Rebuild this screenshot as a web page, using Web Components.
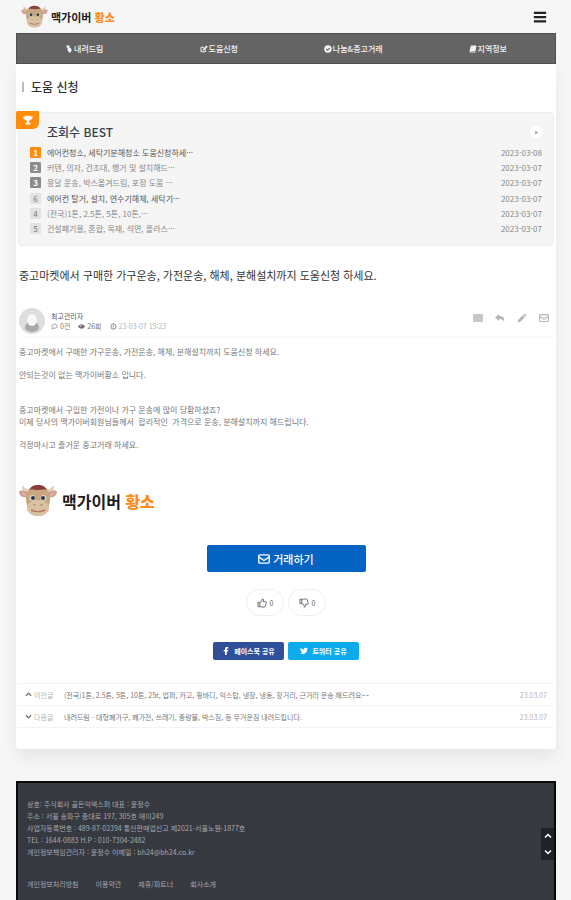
<!DOCTYPE html>
<html lang="ko">
<head>
<meta charset="utf-8">
<meta name="viewport" content="width=device-width, initial-scale=1">
<title>도움 신청 - 맥가이버 황소</title>
<style>
  html{
    height:100%;
  }
  body{
    margin:0;
    min-height:100%;
    box-sizing:border-box;
    padding:0 15px 0 16px;
    display:flex;
    flex-direction:column;
    background:#f6f6f6;
    color:#777;
    font-family:"Noto Sans CJK KR", "Noto Sans", sans-serif;
    font-size:8px;
    line-height:12px;
  }
  main{
    background:#fff;
    border-radius:0 0 4px 4px;
    padding:14px 2px 21px;
    margin-bottom:32px;
    box-shadow:0 8px 16px rgba(0,0,0,.07);
  }
</style>
</head>
<body>
  <site-header></site-header>
  <nav-bar>
    <nav-item icon="hand">내려드림</nav-item>
    <nav-item icon="edit">도움신청</nav-item>
    <nav-item icon="check">나눔&amp;중고거래</nav-item>
    <nav-item icon="book">지역정보</nav-item>
  </nav-bar>

  <main>
    <board-title>도움 신청</board-title>

    <best-list heading="조회수 BEST">
      <best-item rank="1" date="2023-03-08" level="top" strong>에어컨청소, 세탁기분해청소 도움신청하세···</best-item>
      <best-item rank="2" date="2023-03-07" level="mid">커텐, 의자, 건조대, 행거 및 설치해드···</best-item>
      <best-item rank="3" date="2023-03-07" level="mid">용달 운송, 박스옮겨드림, 포장 도움 ···</best-item>
      <best-item slot="more" rank="6" date="2023-03-07" strong>에어컨 탈거, 설치, 연수기해체, 세탁기···</best-item>
      <best-item slot="more" rank="4" date="2023-03-07">(전국)1톤, 2.5톤, 5톤, 10톤,···</best-item>
      <best-item slot="more" rank="5" date="2023-03-07">건설폐기물, 혼합, 목재, 석면, 플라스···</best-item>
    </best-list>

    <post-view>
      <span slot="title">중고마켓에서 구매한 가구운송, 가전운송, 해체, 분해설치까지 도움신청 하세요.</span>
      <span slot="author">최고관리자</span>
      <post-stat slot="meta" icon="comment">0건</post-stat>
      <post-stat slot="meta" icon="eye">26회</post-stat>
      <post-stat slot="meta" icon="clock" light>23-03-07 15:23</post-stat>
      <post-text>중고마켓에서 구매한 가구운송, 가전운송, 해체, 분해설치까지 도움신청 하세요.</post-text>
      <post-text>안되는것이 없는 맥가이버황소 입니다.</post-text>
      <post-text spaced>중고마켓에서 구입한 가전이나 가구 운송에 많이 당황하셨죠?<br>이제 당사의 맥가이버회원님들께서&nbsp; 합리적인&nbsp; 가격으로 운송, 분해설치까지 해드립니다.</post-text>
      <post-text>걱정마시고 즐거운 중고거래 하세요.</post-text>
    </post-view>

    <bull-logo large></bull-logo>

    <post-actions></post-actions>

    <sibling-post icon="up" label="이전글" date="23.03.07">(전국)1톤, 2.5톤, 5톤, 10톤, 25t, 업퍼, 카고, 윙바디, 익스탑, 냉장, 냉동, 장거리, 근거리 운송 해드려요~~</sibling-post>
    <sibling-post icon="down" label="다음글" date="23.03.07">내려드림 - 대형폐가구, 폐가전, 쓰레기, 중량물, 박스짐, 등 무거운짐 내려드립니다.</sibling-post>
  </main>

  <site-footer>
    <div>상호: 주식회사 골든익엑스퍼 대표 : 윤정수</div>
    <div>주소 : 서울 송파구 중대로 197, 305호 에이249</div>
    <div>사업자등록번호 : 489-87-02394 통신판매업신고 제2021-서울노원-1877호</div>
    <div>TEL : 1644-0883 H.P : 010-7304-2482</div>
    <div>개인정보책임관리자 : 윤정수 이메일 : bh24@bh24.co.kr</div>
    <a slot="links" href="#">개인정보처리방침</a>
    <a slot="links" href="#">이용약관</a>
    <a slot="links" href="#">제휴/파트너</a>
    <a slot="links" href="#">회사소개</a>
  </site-footer>
  <page-scroller></page-scroller>

<script>
// all icons share a 16x16 box
const icons = {
  menu: '<path d="M1 2h14v2.6H1zM1 6.8h14v2.6H1zM1 11.6h14v2.6H1z"/>',
  hand: '<path d="M3 1h6v4l4 3v3l-2 4H8L5 10V5H3z"/>',
  edit: '<path d="M11 9.500V13.500H2V4.500H8" fill="none" stroke="currentColor" stroke-width="2"/><path d="M6 8l7-7 2.500 2.500-7 7L5.500 11z"/>',
  check: '<path fill-rule="evenodd" d="M8 0.500a7.500 7.500 0 1 0 0 15 7.500 7.500 0 0 0 0-15zM7 12L3.500 8.500 5 7l2 2 4-4 1.500 1.500z"/>',
  book: '<path d="M4 1h11l-2 11H3.500v1H13v2H2.500L1 12z"/>',
  trophy: '<path d="M4 1h8v1.500h3.500c0 3.500-1.500 5-4 5.500L9.500 10v2.500H12V15H4v-2.500h2.500V10L4.500 8C2 7.500.5 6 .5 2.500H4z"/>',
  play: '<path d="M4 2l9 6-9 6z"/>',
  comment: '<path d="M8 2.500c3.500 0 6 2 6 4.700s-2.500 4.800-6 4.800c-.8 0-1.500 0-2.200-.3L2.500 14l1-3.300C2.500 9.800 2 8.500 2 7.200 2 4.500 4.500 2.500 8 2.500z" fill="none" stroke="currentColor" stroke-width="1.600"/>',
  eye: '<path d="M0 8c2-3.500 5-5 8-5s6 1.500 8 5c-2 3.500-5 5-8 5s-6-1.500-8-5z"/><circle cx="6.500" cy="6.500" r="1.500" fill="#fff"/>',
  clock: '<circle cx="8" cy="8" r="6" fill="none" stroke="currentColor" stroke-width="2"/><path d="M8 4.500V9H5.500" fill="none" stroke="currentColor" stroke-width="1.600"/>',
  list: '<path d="M0 2h16v2.400H0zM0 5.200h16v2.400H0zM0 8.400h16v2.400H0zM0 11.600h16V14H0z"/>',
  reply: '<path d="M6.500 1.500v3.200c6.500 0 9.500 3.300 8 9.800-.8-3.700-3-5-8-5v3.300L0 7z"/>',
  pencil: '<path d="M1 15l1-4.200L9.200 3.600l3.200 3.200L5.200 14zM10.200 2.600L12 .8l3.200 3.200-1.800 1.800z"/>',
  mail: '<rect x="1" y="2.500" width="14" height="11" rx="1.500" fill="none" stroke="currentColor" stroke-width="1.800"/><path d="M1.500 5.500L8 10l6.500-4.500" fill="none" stroke="currentColor" stroke-width="1.800"/>',
  thumbUp: '<path d="M1.500 7h3v7h-3zM4.500 7.500L8 4.500 8.500 1.500c2-.2 2.500 1.500 1.500 4.500h4c1 0 1 1.500.5 2.500L13 13.500c-.3.700-.8 1-1.500 1H7.500L4.500 13" fill="none" stroke="currentColor" stroke-width="1.500"/>',
  thumbDown: '<path d="M1.500 7h3v7h-3zM4.500 7.500L8 4.500 8.500 1.500c2-.2 2.500 1.500 1.500 4.500h4c1 0 1 1.500.5 2.500L13 13.500c-.3.700-.8 1-1.500 1H7.500L4.500 13" transform="matrix(1 0 0 -1 0 16)" fill="none" stroke="currentColor" stroke-width="1.500"/>',
  facebook: '<path d="M6 16V9H3.500V6H6V4c0-2.700 1.500-4 4-4h2.500v3H11C9.800 3 9.500 3.500 9.500 4.500V6h3L12 9H9.500v7z"/>',
  twitter: '<path d="M16 3.500l-1.600 1.700C14.300 10.500 11 14 6 14c-2.300 0-4.300-.6-6-1.800 2 .2 3.500-.3 4.800-1.300-1.500-.1-2.600-1-3-2.300h1.400C1.600 8 .7 6.800.7 5.300l1.400.4C.7 4.500.4 3 1.200 1.300 3 3.500 5.200 4.600 7.900 4.800 7.500 2.500 9 1.300 11 1.300c1 0 1.800.4 2.400 1l2-.8-1.200 1.800z"/>',
  up: '<path d="M2 11l6-6 6 6" fill="none" stroke="currentColor" stroke-width="3"/>',
  down: '<path d="M2 5l6 6 6-6" fill="none" stroke="currentColor" stroke-width="3"/>'
};

function define(name, render) {
  window.customElements.define(name, class extends HTMLElement {
    constructor() {
      super();
      this.attachShadow({mode:'open'});
    }
    connectedCallback() {
      this.shadowRoot.innerHTML = render(this);
    }
  });
}

define('app-icon', el => `
  <style>
    :host{
      display:inline-block;
      flex:none;
      width:var(--icon, 8px);
      height:var(--icon, 8px);
    }
    svg{
      display:block;
      width:100%;
      height:100%;
      fill:currentColor;
    }
  </style>
  <svg viewBox="0 0 16 16" aria-hidden="true">${icons[el.getAttribute('name')]}</svg>
`);

define('bull-logo', () => `
  <style>
    :host{
      display:block;
    }
    a{
      display:inline-flex;
      align-items:center;
      gap:3px;
      color:#1c1c1c;
      font-size:11px;
      line-height:16px;
      font-weight:700;
      text-decoration:none;
      vertical-align:top;
    }
    svg{
      display:block;
      width:27px;
      height:23px;
    }
    b{
      color:#ff8c1a;
    }
    :host([large]){
      margin-top:33px;
    }
    :host([large]) a{
      font-size:16px;
      line-height:24px;
      gap:5px;
      padding-left:1px;
    }
    :host([large]) svg{
      width:38px;
      height:33px;
    }
  </style>
  <a href="#">
    <svg viewBox="0 0 38 33" aria-hidden="true">
      <path d="M8 9C3 8 2 4 4 1c1 3 3 4 7 5zM30 9c5-1 6-5 4-8-1 3-3 4-7 5z" fill="#e0d3b4"/>
      <path d="M9 9C5 6 1 6 0 8c1 5 5 6 9 5zM29 9c4-3 8-3 9-1-1 5-5 6-9 5z" fill="#c9a08c"/>
      <path d="M7 10C5 8 3 8 2 9c1 2 3 3 5 3zM31 10c2-2 4-2 5-1-1 2-3 3-5 3z" fill="#e3a9a9"/>
      <path d="M19 2c8 0 12 5 12 12 0 3 0 4-1 7 0 7-4 11-11 11S8 28 8 21c-1-3-1-4-1-7C7 7 11 2 19 2z" fill="#c9a67e"/>
      <path d="M10 6c2-4 5-5 9-5s7 1 9 5c-3-1-5 0-9 0s-6-1-9 0z" fill="#8b3f3c"/>
      <ellipse cx="19" cy="24" rx="11" ry="8" fill="#d8c2a2"/>
      <circle cx="13.500" cy="14" r="3" fill="#d9d6cf"/>
      <circle cx="24.500" cy="14" r="3" fill="#d9d6cf"/>
      <circle cx="14" cy="14" r="2" fill="#2b3a4c"/>
      <circle cx="24" cy="14" r="2" fill="#2b3a4c"/>
      <circle cx="15.500" cy="21" r="1" fill="#b08e6c"/>
      <circle cx="22.500" cy="21" r="1" fill="#b08e6c"/>
      <path d="M12 26c4 2 10 2 14 0" fill="none" stroke="#b8766a" stroke-width="1.400"/>
    </svg>
    <span>맥가이버 <b>황소</b></span>
  </a>
`);

define('site-header', () => `
  <style>
    :host{
      display:flex;
      align-items:center;
      justify-content:space-between;
      height:33px;
      padding:0 9px 0 5px;
    }
    button{
      --icon:14px;
      display:flex;
      border:0;
      padding:0;
      background:none;
      color:#222;
    }
  </style>
  <bull-logo></bull-logo>
  <button aria-label="메뉴"><app-icon name="menu"></app-icon></button>
`);

define('nav-bar', () => `
  <style>
    :host{
      display:block;
      background:#646464;
      border:1px solid #505050;
      box-sizing:border-box;
    }
    nav{
      display:grid;
      grid-template-columns:repeat(4, 1fr);
      height:29px;
    }
  </style>
  <nav><slot></slot></nav>
`);

define('nav-item', el => `
  <style>
    :host{
      display:flex;
      align-items:center;
      justify-content:center;
    }
    a{
      display:flex;
      align-items:center;
      gap:1px;
      color:#f4f4f4;
      font-weight:500;
      text-decoration:none;
      white-space:nowrap;
    }
  </style>
  <a href="#"><app-icon name="${el.getAttribute('icon')}"></app-icon><slot></slot></a>
`);

define('board-title', () => `
  <style>
    :host{
      display:flex;
      align-items:center;
      gap:7px;
      padding-left:4px;
    }
    :host::before{
      content:"";
      width:2px;
      height:10px;
      background:#bbb;
    }
    h1{
      margin:0;
      color:#333;
      font-size:12px;
      line-height:18px;
      font-weight:500;
    }
  </style>
  <h1><slot></slot></h1>
`);

define('best-list', el => `
  <style>
    :host{
      display:block;
      position:relative;
      margin:16px 0 20px;
      padding:10px 11px 9px;
      background:#f5f5f5;
      border:1px solid #eee;
      border-radius:4px;
    }
    .ribbon{
      --icon:10px;
      position:absolute;
      top:-2px;
      left:-3px;
      display:flex;
      align-items:center;
      justify-content:center;
      width:23px;
      height:18px;
      background:#ff8c0a;
      color:#fff;
      border-radius:2px 0 6px 0;
    }
    header{
      display:flex;
      align-items:center;
      justify-content:space-between;
      padding-left:17px;
      margin-bottom:4px;
    }
    h2{
      margin:0;
      color:#33404d;
      font-size:12px;
      line-height:18px;
      font-weight:500;
    }
    button{
      --icon:5px;
      display:flex;
      align-items:center;
      justify-content:center;
      width:12px;
      height:12px;
      padding:0;
      border:0;
      border-radius:50%;
      background:#fff;
      color:#999;
    }
    .more{
      margin-top:1px;
    }
  </style>
  <span class="ribbon"><app-icon name="trophy"></app-icon></span>
  <header>
    <h2>${el.getAttribute('heading')}</h2>
    <button aria-label="더보기"><app-icon name="play"></app-icon></button>
  </header>
  <div><slot></slot></div>
  <div class="more"><slot name="more"></slot></div>
`);

define('best-item', el => `
  <style>
    :host{
      display:flex;
      align-items:center;
      height:15px;
      color:#888;
    }
    :host([strong]){
      color:#555;
    }
    .rank{
      width:11px;
      margin-right:6px;
      border-radius:1px;
      background:#e2e2e2;
      color:#777;
      line-height:11px;
      text-align:center;
    }
    :host([level="top"]) .rank{
      background:#ff8c0a;
      color:#fff;
      font-weight:700;
    }
    :host([level="mid"]) .rank{
      background:#8c8c8c;
      color:#fff;
      font-weight:700;
    }
    a{
      flex:1;
      color:inherit;
      text-decoration:none;
    }
    time{
      color:#888;
    }
  </style>
  <span class="rank">${el.getAttribute('rank')}</span>
  <a href="#"><slot></slot></a>
  <time>${el.getAttribute('date')}</time>
`);

define('post-view', () => `
  <style>
    :host{
      display:block;
    }
    h2{
      margin:0 0 24px;
      padding-left:1px;
      color:#333;
      font-size:11px;
      line-height:18px;
      font-weight:400;
    }
    header{
      display:flex;
      align-items:center;
      gap:6px;
      padding:0 5px 2px 1px;
      border-bottom:1px solid #fafafa;
    }
    .avatar{
      width:26px;
      height:26px;
    }
    .who{
      flex:1;
      font-size:7px;
      line-height:10px;
      color:#555;
    }
    .meta{
      display:flex;
      gap:8px;
    }
    .tools{
      --icon:10px;
      display:flex;
      gap:12px;
      padding-bottom:7px;
    }
    button{
      display:flex;
      padding:0;
      border:0;
      background:none;
      color:#b5b5b5;
    }
    .text{
      padding:9px 1px 0;
    }
  </style>
  <h2><slot name="title"></slot></h2>
  <header>
    <svg class="avatar" viewBox="0 0 26 26" aria-hidden="true">
      <circle cx="13" cy="13" r="13" fill="#dedede"/>
      <path d="M6 21c0-6 3-7 7-7s7 1 7 7c-4 4-10 4-14 0z" fill="#aaa"/>
      <ellipse cx="13" cy="12" rx="5" ry="6" fill="#f8f8f8"/>
    </svg>
    <div class="who">
      <slot name="author"></slot>
      <div class="meta"><slot name="meta"></slot></div>
    </div>
    <div class="tools">
      <button aria-label="목록"><app-icon name="list"></app-icon></button>
      <button aria-label="답변"><app-icon name="reply"></app-icon></button>
      <button aria-label="수정"><app-icon name="pencil"></app-icon></button>
      <button aria-label="메일"><app-icon name="mail"></app-icon></button>
    </div>
  </header>
  <div class="text"><slot></slot></div>
`);

define('post-stat', el => `
  <style>
    :host{
      --icon:7px;
      display:flex;
      align-items:center;
      gap:2px;
      color:#777;
    }
    :host([light]) span{
      color:#b5b5b5;
    }
  </style>
  <app-icon name="${el.getAttribute('icon')}"></app-icon><span><slot></slot></span>
`);

define('post-text', () => `
  <style>
    :host{
      display:block;
      margin-bottom:11px;
    }
    :host([spaced]){
      margin-top:23px;
    }
    p{
      margin:0;
    }
  </style>
  <p><slot></slot></p>
`);

define('post-actions', () => `
  <style>
    :host{
      display:flex;
      flex-direction:column;
      align-items:center;
      padding:28px 0 23px;
    }
    button{
      display:flex;
      align-items:center;
      justify-content:center;
      border:0;
      padding:0;
      font-family:inherit;
    }
    .deal{
      --icon:12px;
      gap:3px;
      width:159px;
      height:27px;
      border-radius:2px;
      background:#0563c1;
      color:#fff;
      font-size:11px;
      font-weight:500;
    }
    .row{
      display:flex;
      gap:4px;
    }
    .votes{
      margin:17px 0 26px;
    }
    .votes button{
      --icon:10px;
      gap:3px;
      width:38px;
      height:27px;
      border:1px solid #eee;
      border-radius:14px;
      background:#fff;
      color:#666;
      font-size:7px;
    }
  </style>
  <button class="deal"><app-icon name="mail"></app-icon>거래하기</button>
  <div class="row votes">
    <button aria-label="추천"><app-icon name="thumbUp"></app-icon>0</button>
    <button aria-label="비추천"><app-icon name="thumbDown"></app-icon>0</button>
  </div>
  <div class="row">
    <share-link icon="facebook" style="--brand:#304f9a">페이스북 공유</share-link>
    <share-link icon="twitter" style="--brand:#0cabec">트위터 공유</share-link>
  </div>
`);

define('share-link', el => `
  <style>
    :host{
      display:block;
    }
    a{
      display:flex;
      align-items:center;
      justify-content:center;
      gap:4px;
      width:71px;
      height:18px;
      border-radius:2px;
      background:var(--brand);
      color:#fff;
      font-size:7px;
      font-weight:700;
      text-decoration:none;
    }
  </style>
  <a href="#"><app-icon name="${el.getAttribute('icon')}"></app-icon><slot></slot></a>
`);

define('sibling-post', el => `
  <style>
    :host{
      --icon:7px;
      display:flex;
      align-items:center;
      height:21px;
      padding:0 7px;
      border-top:1px solid #f3f3f3;
      color:#777;
      font-size:7px;
    }
    :host(:last-of-type){
      border-bottom:1px solid #f3f3f3;
    }
    .label{
      display:flex;
      align-items:center;
      gap:2px;
      width:39px;
    }
    .label span, time{
      color:#b5b5b5;
    }
    a{
      flex:1;
      color:inherit;
      text-decoration:none;
    }
  </style>
  <div class="label"><app-icon name="${el.getAttribute('icon')}"></app-icon><span>${el.getAttribute('label')}</span></div>
  <a href="#"><slot></slot></a>
  <time>${el.getAttribute('date')}</time>
`);

define('site-footer', () => `
  <style>
    :host{
      display:block;
      flex:1;
      padding:15px 9px 10px;
      background:#363940;
      border:2px solid #0a0a0c;
      border-bottom:0;
      color:#a6a8ad;
      font-size:7px;
    }
    nav{
      display:flex;
      gap:17px;
      margin-top:20px;
    }
    ::slotted(a){
      color:inherit;
      text-decoration:none;
    }
  </style>
  <footer>
    <slot></slot>
    <nav><slot name="links"></slot></nav>
  </footer>
`);

// floats over the right edge of the page
define('page-scroller', () => `
  <style>
    :host{
      --icon:8px;
      position:fixed;
      right:17px;
      bottom:40px;
      display:flex;
      flex-direction:column;
      background:#1f2329;
    }
    button{
      display:flex;
      align-items:center;
      justify-content:center;
      width:13px;
      height:16px;
      padding:0;
      border:0;
      background:none;
      color:#fff;
    }
  </style>
  <button aria-label="위로"><app-icon name="up"></app-icon></button>
  <button aria-label="아래로"><app-icon name="down"></app-icon></button>
`);
</script>
</body>
</html>
